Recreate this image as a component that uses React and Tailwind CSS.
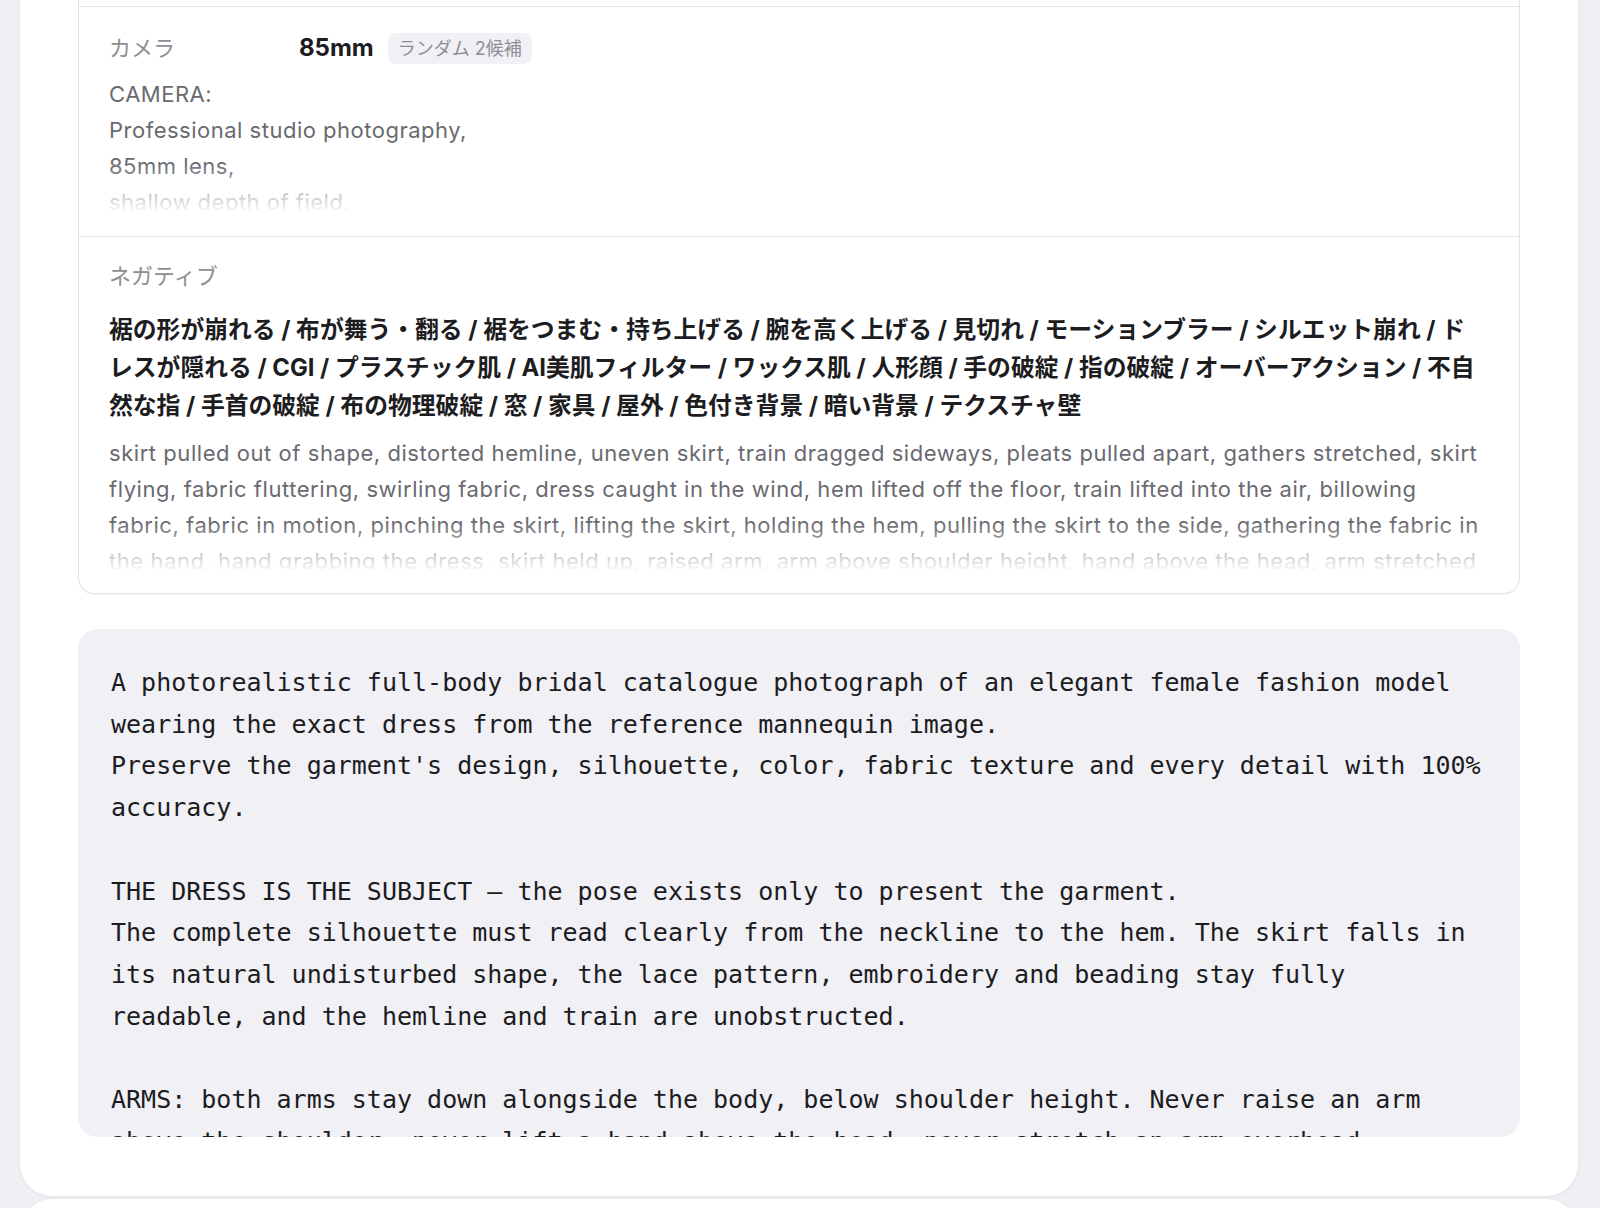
import React from "react";

const cameraText = `CAMERA:
Professional studio photography,
85mm lens,
shallow depth of field,
soft diffused key light,
neutral color grading.`;

const negativeJa = [
  "裾の形が崩れる / 布が舞う・翻る / 裾をつまむ・持ち上げる / 腕を高く上げる / 見切れ / モーションブラー / シルエット崩れ / ド",
  "レスが隠れる / CGI / プラスチック肌 / AI美肌フィルター / ワックス肌 / 人形顔 / 手の破綻 / 指の破綻 / オーバーアクション / 不自",
  "然な指 / 手首の破綻 / 布の物理破綻 / 窓 / 家具 / 屋外 / 色付き背景 / 暗い背景 / テクスチャ壁",
];

const negativeEn = [
  "skirt pulled out of shape, distorted hemline, uneven skirt, train dragged sideways, pleats pulled apart, gathers stretched, skirt",
  "flying, fabric fluttering, swirling fabric, dress caught in the wind, hem lifted off the floor, train lifted into the air, billowing",
  "fabric, fabric in motion, pinching the skirt, lifting the skirt, holding the hem, pulling the skirt to the side, gathering the fabric in",
  "the hand, hand grabbing the dress, skirt held up, raised arm, arm above shoulder height, hand above the head, arm stretched",
  "overhead, motion blur, cropped hem, cut-off train, plastic skin, CGI, doll face",
];

const prompt = `A photorealistic full-body bridal catalogue photograph of an elegant female fashion model wearing the exact dress from the reference mannequin image.
Preserve the garment's design, silhouette, color, fabric texture and every detail with 100% accuracy.

THE DRESS IS THE SUBJECT — the pose exists only to present the garment.
The complete silhouette must read clearly from the neckline to the hem. The skirt falls in its natural undisturbed shape, the lace pattern, embroidery and beading stay fully readable, and the hemline and train are unobstructed.

ARMS: both arms stay down alongside the body, below shoulder height. Never raise an arm above the shoulder, never lift a hand above the head, never stretch an arm overhead.
HANDS: relaxed and natural, never touching or gathering the skirt.`;

function FadedBlock({ children, className }) {
  return (
    <div className={`relative h-[135px] overflow-hidden ${className}`}>
      {children}
      <div className="pointer-events-none absolute inset-x-0 bottom-0 h-[48px] bg-linear-to-b from-white/0 to-white/95" />
    </div>
  );
}

export default function App() {
  return (
    <div
      className="h-[1208px] overflow-hidden bg-[#efeff4] pl-[20px] pr-[22px]"
      style={{ fontFamily: 'Inter, "Noto Sans CJK JP", sans-serif' }}
    >
      <div className="-mt-[100px]">
        <div className="rounded-[32px] bg-white px-[58px] pt-[40px] pb-[59px] shadow-[0_1px_4px_rgba(0,0,0,0.06)]">
          {/* prompt sections */}
          <div className="overflow-hidden rounded-[16px] border border-[#e3e3e8] bg-white shadow-[0_1px_1px_rgba(0,0,0,0.04)]">
            <div className="h-[66px] border-b border-[#e5e5ea]" />

            <div className="border-b border-[#e5e5ea] pl-[30px] pr-[38px] pt-[26px] pb-[25px]">
              <div className="flex h-[30px] items-center">
                <span className="w-[190px] text-[22px] text-[#8e8e93]">カメラ</span>
                <span className="text-[24px] font-bold text-[#1d1d1f]">85mm</span>
                <span className="ml-[14px] flex h-[31px] items-center rounded-[8px] bg-[#f0f0f5] px-[10px] text-[18px] text-[#8e8e93]">
                  ランダム 2候補
                </span>
              </div>
              <FadedBlock className="mt-[13px]">
                <p className="whitespace-pre-line text-[22px] leading-[36px] tracking-[0.5px] text-[#6a6a70]">{cameraText}</p>
              </FadedBlock>
            </div>

            <div className="pl-[30px] pr-[38px] pt-[25px] pb-[23px]">
              <p className="text-[22px] leading-[28px] text-[#8e8e93]">ネガティブ</p>
              <div className="mt-[21px] text-[23.8px] font-bold leading-[38px] text-[#1d1d1f]">
                {negativeJa.map((line) => (
                  <span key={line} className="block whitespace-nowrap">{line}</span>
                ))}
              </div>
              <FadedBlock className="mt-[10px]">
                <div className="text-[22px] leading-[36px] tracking-[0.55px] text-[#6a6a70]">
                  {negativeEn.map((line) => (
                    <span key={line} className="block whitespace-nowrap">{line}</span>
                  ))}
                </div>
              </FadedBlock>
            </div>
          </div>

          {/* generated prompt */}
          <div className="mt-[35px] h-[508px] overflow-hidden rounded-[20px] bg-[#f0f0f5] px-[33px] pt-[33px]">
            <pre
              className="whitespace-pre-wrap text-[25px] leading-[41.7px] text-[#1c1c1e]"
              style={{ fontFamily: '"DejaVu Sans Mono", monospace' }}
            >
              {prompt}
            </pre>
          </div>
        </div>

        <div className="mt-[3px] h-[300px] rounded-[32px] bg-white shadow-[0_1px_4px_rgba(0,0,0,0.06)]" />
      </div>
    </div>
  );
}
